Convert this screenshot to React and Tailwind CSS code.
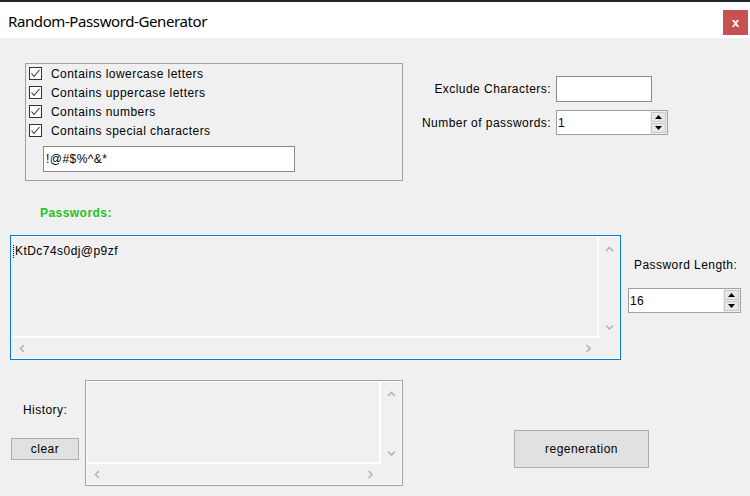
import React from 'react';

const font = { fontFamily: '"Liberation Sans", Arial, sans-serif' };

const Chevron = ({ dir }) => {
  const pts = {
    up: '1,5 4.5,1.5 8,5',
    down: '1,1.5 4.5,5 8,1.5',
    left: '5,1 1.5,4.5 5,8',
    right: '1.5,1 5,4.5 1.5,8',
  }[dir];
  const horiz = dir === 'left' || dir === 'right';
  return (
    <svg width={horiz ? 7 : 9} height={horiz ? 9 : 7} viewBox={horiz ? '0 0 7 9' : '0 0 9 7'}>
      <polyline points={pts} fill="none" stroke="#b4b4b4" strokeWidth="1.6" />
    </svg>
  );
};

const ScrollBox = ({ className, children }) => (
  <div className={`border bg-white ${className}`}>
    <div className="h-full border border-white grid grid-cols-[1fr_20px] grid-rows-[1fr_20px] bg-[#f0f0f0]">
      <div className="border-r-2 border-b-2 border-white overflow-hidden">{children}</div>
      <div className="flex flex-col items-center justify-between pt-[9px] pb-[7px]">
        <Chevron dir="up" />
        <Chevron dir="down" />
      </div>
      <div className="flex items-center justify-between pl-[7px] pr-[7px]">
        <Chevron dir="left" />
        <Chevron dir="right" />
      </div>
      <div />
    </div>
  </div>
);

const Spin = ({ value, className }) => (
  <div className={`flex bg-white border border-[#a0a0a0] ${className}`}>
    <div className="flex-1 flex items-center pl-[1px] text-[12px] text-black">{value}</div>
    <div className="w-[17px] flex flex-col p-[1px] gap-[1px] bg-[#f0f0f0]">
      <div className="flex-1 flex items-center justify-center bg-[#e8e8e8] border border-[#c8c8c8]">
        <svg width="7" height="4" viewBox="0 0 7 4"><polygon points="0,4 3.5,0 7,4" fill="#000" /></svg>
      </div>
      <div className="flex-1 flex items-center justify-center bg-[#e8e8e8] border border-[#c8c8c8]">
        <svg width="7" height="4" viewBox="0 0 7 4"><polygon points="0,0 3.5,4 7,0" fill="#000" /></svg>
      </div>
    </div>
  </div>
);

const CheckRow = ({ label }) => (
  <div className="h-[19px] flex items-center">
    <div className="w-[13px] h-[13px] border border-[#333333] bg-white flex items-center justify-center">
      <svg width="11" height="11" viewBox="0 0 11 11">
        <polyline points="1.5,5.5 4,8.5 9.5,2" fill="none" stroke="#333333" strokeWidth="1.1" />
      </svg>
    </div>
    <span className="ml-[9px] text-[12px] text-black">{label}</span>
  </div>
);

export default function App() {
  const options = [
    'Contains lowercase letters',
    'Contains uppercase letters',
    'Contains numbers',
    'Contains special characters',
  ];

  return (
    <div className="w-[750px] h-[496px] flex flex-col bg-[#f0f0f0] overflow-hidden tracking-[0.45px]" style={font}>
      <div className="h-[2px] bg-[#1c232c]" />
      <div className="h-[36px] bg-white flex justify-between tracking-normal">
        <span className="pl-[8px] pt-[8px] text-[15px] text-black tracking-[-0.4px]" style={{ fontFamily: '"Noto Sans", sans-serif' }}>
          Random-Password-Generator
        </span>
        <div className="mt-[8px] mr-[2px] w-[25px] h-[25px] bg-[#c75050] flex items-center justify-center text-white text-[13px] font-bold">
          x
        </div>
      </div>

      <div className="flex flex-col pt-[25px]">
        <div className="flex">
          <div className="ml-[25px] w-[378px] h-[118px] border border-[#a0a0a0] pl-[3px]">
            {options.map((o) => (
              <CheckRow key={o} label={o} />
            ))}
            <div className="mt-[6px] ml-[14px] w-[252px] h-[26px] bg-white border border-[#8a8a8a] flex items-center pl-[2px] text-[12px] text-black">
              !@#$%^&*
            </div>
          </div>

          <div className="ml-[17px] mt-[13px] flex flex-col">
            <div className="flex items-center">
              <span className="w-[131px] text-right text-[12px] text-black">Exclude Characters:</span>
              <div className="ml-[5px] w-[96px] h-[26px] bg-white border border-[#8a8a8a]" />
            </div>
            <div className="flex items-center mt-[8px]">
              <span className="w-[131px] text-right text-[12px] text-black whitespace-nowrap">Number of passwords:</span>
              <Spin value="1" className="ml-[5px] w-[112px] h-[25px]" />
            </div>
          </div>
        </div>

        <div className="ml-[40px] mt-[25px] h-[14px] leading-[14px] text-[12px] font-bold text-[#22c322]">Passwords:</div>

        <div className="flex mt-[15px]">
          <ScrollBox className="ml-[10px] w-[611px] h-[125px] border-[#0078d7]">
            <div className="pl-[1px] pt-[5px] text-[12px] text-black flex items-center">
              <span className="inline-block h-[13px] border-l border-dotted border-black mr-[1px]" />
              KtDc74s0dj@p9zf
            </div>
          </ScrollBox>
          <div className="ml-[7px] flex flex-col">
            <span className="mt-[23px] ml-[6px] h-[14px] leading-[14px] text-[12px] text-black whitespace-nowrap">Password Length:</span>
            <Spin value="16" className="mt-[16px] w-[113px] h-[25px]" />
          </div>
        </div>

        <div className="flex mt-[20px]">
          <div className="ml-[11px] w-[68px] flex flex-col">
            <span className="mt-[23px] ml-[12px] h-[14px] leading-[14px] text-[12px] text-black">History:</span>
            <div className="mt-[21px] h-[22px] bg-[#e1e1e1] border border-[#adadad] flex items-center justify-center text-[12px] text-black">
              clear
            </div>
          </div>
          <ScrollBox className="ml-[6px] w-[318px] h-[106px] border-[#a0a0a0]" />
          <div className="ml-[111px] mt-[50px] w-[135px] h-[38px] bg-[#e1e1e1] border border-[#adadad] flex items-center justify-center text-[12px] text-black">
            regeneration
          </div>
        </div>
      </div>
    </div>
  );
}
